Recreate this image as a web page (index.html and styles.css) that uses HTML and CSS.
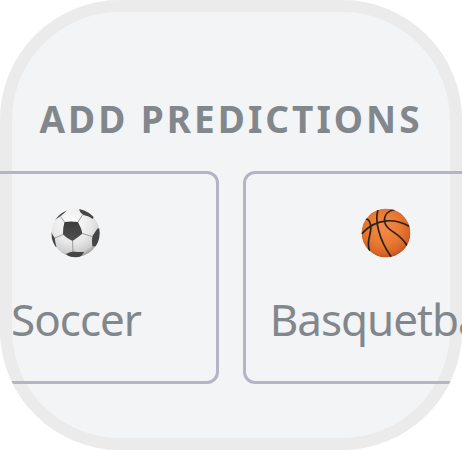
FILE: index.html
```html
<!DOCTYPE html>
<html lang="en">
<head>
<meta charset="utf-8">
<meta name="viewport" content="width=device-width, initial-scale=1">
<title>Add predictions</title>
<link rel="stylesheet" href="styles.css">
</head>
<body>
<main class="panel">
  <h1 class="title">ADD PREDICTIONS</h1>
  <div class="sports">
    <button class="sport" type="button">
      <svg class="ball" viewBox="0 0 50 50" aria-hidden="true">
        <defs>
          <radialGradient id="white" cx=".42" cy=".3" r=".72">
            <stop offset="0" stop-color="#fff"/>
            <stop offset=".55" stop-color="#e9e9e9"/>
            <stop offset=".85" stop-color="#cfcfcf"/>
            <stop offset="1" stop-color="#959595"/>
          </radialGradient>
          <linearGradient id="dark" x2="0" y2="1">
            <stop offset="0" stop-color="#3d3d3d"/>
            <stop offset="1" stop-color="#505050"/>
          </linearGradient>
          <clipPath id="soccer-clip"><circle cx="24.500" cy="25" r="24.200"/></clipPath>
        </defs>
        <g clip-path="url(#soccer-clip)">
          <circle cx="24.500" cy="25" r="24.200" fill="url(#white)"/>
          <g fill="none" stroke="#939393" stroke-width=".9">
            <path d="M13.500 14 9.500 8.500M27 14 31.500 7M31.500 25.500 41 28.500M21.500 33 22 43.500M12 26.500 4 30"/>
          </g>
          <path d="M13.500 14Q20 12.800 27 14Q30 19.500 31.500 25.500Q27 29.500 21.500 33Q16 30.500 12 26.500Q11.700 20 13.500 14Z" fill="url(#dark)"/>
          <path d="M16 2Q12.500 6.500 4.500 11.500L0 8 12 0ZM28 1.500Q29.500 5.500 32.500 7Q38 8 42 11L44 5 34-2ZM46.500 20.500Q44 24 41.500 28Q40.500 33 41.500 38.500L50 38V20ZM.500 24Q1.500 27.500 3.800 30Q4 34 5.500 39L0 38ZM15 46Q18 44 22 43.500Q28 44.300 33 44Q30 50 24 50Q19 50 15 46Z" fill="#454545"/>
        </g>
      </svg>
      <span class="name">Soccer</span>
    </button>
    <button class="sport" type="button">
      <svg class="ball" viewBox="0 0 50 50" aria-hidden="true">
        <defs>
          <radialGradient id="orange" cx=".45" cy=".4" r=".62">
            <stop offset="0" stop-color="#f58a48"/>
            <stop offset=".55" stop-color="#e97932"/>
            <stop offset=".85" stop-color="#d76525"/>
            <stop offset="1" stop-color="#b45026"/>
          </radialGradient>
          <clipPath id="basket-clip"><circle cx="25" cy="25" r="24.500"/></clipPath>
        </defs>
        <g clip-path="url(#basket-clip)">
          <circle cx="25" cy="25" r="24.500" fill="url(#orange)"/>
          <g fill="none" stroke="#29231f" stroke-width="1.700">
            <path d="M.500 26C7 18.500 15 13.500 26 12.800Q38 12.200 48.500 18.500"/>
            <path d="M17 2C13.500 12 18 32 30 48.500"/>
            <path d="M34 1.500C27 2.500 23.200 7 23.500 13C25 24 38 23 46 37.500"/>
            <path d="M4 11C8 10.500 9.500 14 9.800 20C10 28 5 32 8.500 43"/>
          </g>
        </g>
      </svg>
      <span class="name">Basquetball</span>
    </button>
  </div>
</main>
</body>
</html>
```
FILE: styles.css
```css
* {
  box-sizing: border-box;
}

body {
  margin: 0;
  background: #fff;
  color: #82878c;
  font-family: "Noto Sans", "Open Sans", sans-serif;
}

.panel {
  display: flex;
  flex-direction: column;
  align-items: center;
  gap: 26px;
  min-height: 100vh;
  padding-top: 93px;
  overflow: hidden;
  border-radius: 120px;
  background: #f3f4f6;
  box-shadow: inset 0 0 0 12px #ebebeb;
}

.title {
  margin: 0;
  font-size: 37px;
  line-height: 52px;
  font-weight: 700;
  letter-spacing: 3px;
  white-space: nowrap;
}

.sports {
  display: flex;
  justify-content: center;
  gap: 24px;
}

.sport {
  display: flex;
  flex: none;
  flex-direction: column;
  align-items: center;
  gap: 30px;
  width: 286px;
  padding: 34px 24px 31px;
  border: 3px solid #b3b4c5;
  border-radius: 12px;
  background: none;
  color: inherit;
  font: inherit;
}

.ball {
  width: 50px;
  height: 50px;
}

.name {
  font-size: 44px;
  line-height: 62px;
  letter-spacing: -1px;
}
```
